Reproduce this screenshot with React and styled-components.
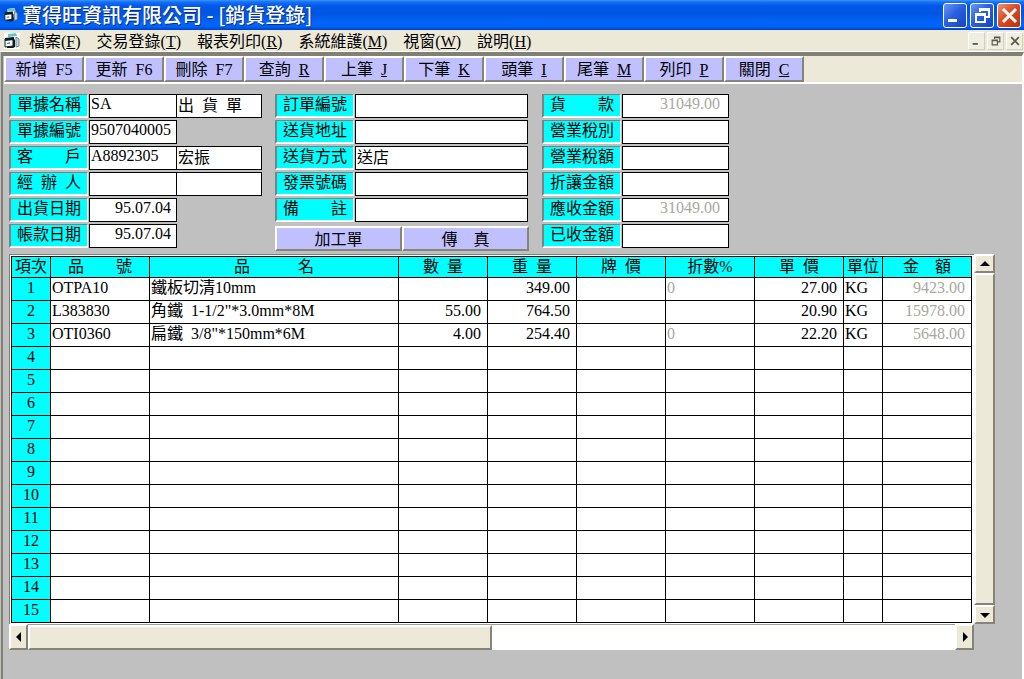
import React from "react";
import styled, { createGlobalStyle, css } from "styled-components";

const menus = [
  ["檔案", "F"],
  ["交易登錄", "T"],
  ["報表列印", "R"],
  ["系統維護", "M"],
  ["視窗", "W"],
  ["說明", "H"],
];

const tools = [
  { label: "新增", keyName: "F5" },
  { label: "更新", keyName: "F6" },
  { label: "刪除", keyName: "F7" },
  { label: "查詢", keyName: "R", mark: true },
  { label: "上筆", keyName: "J", mark: true },
  { label: "下筆", keyName: "K", mark: true },
  { label: "頭筆", keyName: "I", mark: true },
  { label: "尾筆", keyName: "M", mark: true },
  { label: "列印", keyName: "P", mark: true },
  { label: "關閉", keyName: "C", mark: true },
];

const slipFields = [
  { id: "kind", label: "單據名稱", value: "SA", extra: "出  貨  單" },
  { id: "number", label: "單據編號", value: "9507040005" },
  { id: "customer", label: "客　　戶", value: "A8892305", extra: "宏振" },
  { id: "handler", label: "經  辦  人", value: "", extra: "" },
  { id: "shipDate", label: "出貨日期", value: "95.07.04", right: true },
  { id: "billDate", label: "帳款日期", value: "95.07.04", right: true },
];

const orderFields = [
  { id: "order", label: "訂單編號", value: "" },
  { id: "address", label: "送貨地址", value: "" },
  { id: "delivery", label: "送貨方式", value: "送店" },
  { id: "invoice", label: "發票號碼", value: "" },
  { id: "note", label: "備　　註", value: "" },
];

const amountFields = [
  { id: "goods", label: "貨　　款", value: "31049.00" },
  { id: "taxType", label: "營業稅別", value: "" },
  { id: "tax", label: "營業稅額", value: "" },
  { id: "discount", label: "折讓金額", value: "" },
  { id: "due", label: "應收金額", value: "31049.00" },
  { id: "paid", label: "已收金額", value: "" },
];

const columns = [
  { key: "code", title: "品　　號", width: 99 },
  { key: "name", title: "品　　　名" },
  { key: "qty", title: "數  量", width: 89, right: true },
  { key: "weight", title: "重  量", width: 89, right: true },
  { key: "list", title: "牌  價", width: 89, right: true },
  { key: "rate", title: "折數%", width: 89, muted: true },
  { key: "price", title: "單  價", width: 89, right: true },
  { key: "unit", title: "單位", width: 39 },
  { key: "total", title: "金　額", width: 89, right: true, muted: true },
];

const items = [
  { code: "OTPA10", name: "鐵板切清10mm", weight: "349.00", rate: "0", price: "27.00", unit: "KG", total: "9423.00" },
  { code: "L383830", name: '角鐵  1-1/2"*3.0mm*8M', qty: "55.00", weight: "764.50", price: "20.90", unit: "KG", total: "15978.00" },
  { code: "OTI0360", name: '扁鐵  3/8"*150mm*6M', qty: "4.00", weight: "254.40", rate: "0", price: "22.20", unit: "KG", total: "5648.00" },
];

const rows = Array.from({ length: 15 }, (_, i) => items[i] || {});

function FormIcon({ size }) {
  return (
    <svg width={size} height={size} viewBox="0 0 16 16">
      <path d="M4 1l8-1 1 3v8l-9-1z" fill="#f4ffff" />
      <path d="M4 1l8-1 1 3-9 1z" fill="#64c8c8" />
      <path d="M12 4l3 2v7l-3 1z" fill="#c8d8d8" stroke="#788c90" />
      <path d="M1 6l8-1v8l-8 1z" fill="#fff" stroke="#101820" />
      <path d="M1 5l9-1v3L1 8z" fill="#101820" />
      <path d="M9 5l2 2v7l-2 1-6 0v-1l6-1z" fill="#101820" />
      <path d="M3 10l3-1v2H3z" fill="#3ca8a8" />
    </svg>
  );
}

function WindowGlyph({ name, size }) {
  const shapes = {
    min: <path d="M1 12h9v3H1z" fill="currentColor" />,
    restore: (
      <path
        d="M5 1h11v10h-4V9h2V4H7v1H5zM1 6h11v10H1zM3 9v5h7V9z"
        fill="currentColor"
        fillRule="evenodd"
      />
    ),
    close: <path d="M2 2l13 13M15 2L2 15" stroke="currentColor" strokeWidth="3" />,
  };
  return (
    <svg width={size} height={size} viewBox="0 0 17 17">
      {shapes[name]}
    </svg>
  );
}

function Arrow({ turn = 0 }) {
  return (
    <svg width="10" height="10" viewBox="0 0 10 10">
      <path d="M5 2l5 5H0z" fill="#000" transform={`rotate(${turn} 5 5)`} />
    </svg>
  );
}

function Field({ field, first, right, muted, pad }) {
  return (
    <FieldRow>
      <Label htmlFor={field.id}>{field.label}</Label>
      <Box
        id={field.id}
        defaultValue={field.value}
        $width={first}
        $right={right || field.right}
        $muted={muted}
        $pad={pad}
      />
      {field.extra !== undefined && (
        <ExtraBox aria-label={`${field.label} 名稱`} defaultValue={field.extra} $width={86} />
      )}
    </FieldRow>
  );
}

export default function App() {
  return (
    <Window>
      <GlobalStyle />
      <TitleBar>
        <FormIcon size={14} />
        <Title>寶得旺資訊有限公司 - [銷貨登錄]</Title>
        <TitleButton aria-label="最小化">
          <WindowGlyph name="min" size={17} />
        </TitleButton>
        <TitleButton aria-label="還原">
          <WindowGlyph name="restore" size={17} />
        </TitleButton>
        <TitleButton aria-label="關閉視窗" $close>
          <WindowGlyph name="close" size={17} />
        </TitleButton>
      </TitleBar>

      <MenuBar>
        <MenuIcon>
          <FormIcon size={16} />
        </MenuIcon>
        {menus.map(([label, letter]) => (
          <MenuButton key={letter}>
            {label}(<u>{letter}</u>)
          </MenuButton>
        ))}
        <ChildButtons>
          <ChildButton aria-label="最小化子視窗">
            <WindowGlyph name="min" size={10} />
          </ChildButton>
          <ChildButton aria-label="還原子視窗">
            <WindowGlyph name="restore" size={10} />
          </ChildButton>
          <ChildButton aria-label="關閉子視窗">
            <WindowGlyph name="close" size={10} />
          </ChildButton>
        </ChildButtons>
      </MenuBar>

      <Client>
        <ToolBar>
          {tools.map(({ label, keyName, mark }) => (
            <ToolButton key={label}>
              {label}
              {"  "}
              {mark ? <u>{keyName}</u> : keyName}
            </ToolButton>
          ))}
        </ToolBar>

        <Content>
          <Form>
            <Group>
              {slipFields.map((field) => (
                <Field key={field.id} field={field} first={88} pad={5} />
              ))}
            </Group>
            <Group>
              {orderFields.map((field) => (
                <Field key={field.id} field={field} first={173} pad={5} />
              ))}
              <Actions>
                <ActionButton>加工單</ActionButton>
                <ActionButton>傳　真</ActionButton>
              </Actions>
            </Group>
            <Group>
              {amountFields.map((field) => (
                <Field key={field.id} field={field} first={107} pad={8} right muted />
              ))}
            </Group>
          </Form>

          <GridArea>
            <TableFrame>
              <Table>
                <colgroup>
                  <Col $width={39} />
                  {columns.map((col) => (
                    <Col key={col.key} $width={col.width} />
                  ))}
                </colgroup>
                <thead>
                  <tr>
                    <HeadCell scope="col">項次</HeadCell>
                    {columns.map((col) => (
                      <HeadCell key={col.key} scope="col">
                        {col.title}
                      </HeadCell>
                    ))}
                  </tr>
                </thead>
                <tbody>
                  {rows.map((row, index) => (
                    <tr key={index}>
                      <IndexCell scope="row">{index + 1}</IndexCell>
                      {columns.map((col) => (
                        <Cell key={col.key} $right={col.right} $muted={col.muted}>
                          {row[col.key]}
                        </Cell>
                      ))}
                    </tr>
                  ))}
                </tbody>
              </Table>
            </TableFrame>
            <VerticalBar>
              <ScrollButton aria-label="向上捲動">
                <Arrow />
              </ScrollButton>
              <VerticalThumb />
              <ScrollButton aria-label="向下捲動">
                <Arrow turn={180} />
              </ScrollButton>
            </VerticalBar>
            <HorizontalBar>
              <ScrollButton aria-label="向左捲動">
                <Arrow turn={270} />
              </ScrollButton>
              <HorizontalTrack>
                <HorizontalThumb />
              </HorizontalTrack>
              <ScrollButton aria-label="向右捲動">
                <Arrow turn={90} />
              </ScrollButton>
            </HorizontalBar>
          </GridArea>
        </Content>
      </Client>
    </Window>
  );
}

const GlobalStyle = createGlobalStyle`
  * {
    box-sizing: border-box;
  }

  body {
    margin: 0;
    background: #c0c0c0;
  }

  body, button, input, table {
    font-family: "Liberation Serif", "Noto Sans CJK TC", serif;
    font-size: 16px;
    font-weight: 400;
    line-height: 20px;
    color: #000;
  }

  button {
    padding: 0;
    white-space: pre;
  }

  svg {
    display: block;
    flex: none;
  }
`;

const raised = css`
  border: 2px solid;
  border-color: #fff #848478 #848478 #fff;
`;

const Window = styled.div`
  display: flex;
  flex-direction: column;
  min-height: 100vh;
`;

const TitleBar = styled.header`
  display: flex;
  align-items: center;
  gap: 3px;
  height: 30px;
  padding: 0 3px 0 4px;
  background: linear-gradient(
    #3c96ff 0,
    #1670f4 2px,
    #0058e8 6px,
    #0056e4 14px,
    #0066fc 24px,
    #0060f4 27px,
    #0040c8 30px
  );
`;

const Title = styled.h1`
  flex: 1;
  margin: 0 0 0 1px;
  font-family: "Noto Sans CJK TC", sans-serif;
  font-size: 20px;
  font-weight: 500;
  line-height: 28px;
  color: #fff;
  text-shadow: 1px 1px #0a2c80;
  white-space: nowrap;
`;

const TitleButton = styled.button`
  display: flex;
  align-items: center;
  justify-content: center;
  width: 24px;
  height: 25px;
  border: 1px solid #fff;
  border-radius: 3px;
  color: #fff;
  background: ${(props) =>
    props.$close
      ? "linear-gradient(135deg, #ec9478, #dc4c20 45%, #b83008)"
      : "linear-gradient(135deg, #6c98f0, #2c60e0 45%, #1444c0)"};
`;

const MenuBar = styled.nav`
  display: flex;
  align-items: center;
  height: 22px;
  padding: 0 1px 0 4px;
  border-bottom: 1px solid #fff;
  background: #ece9d8;
`;

const MenuIcon = styled.span`
  margin-right: 1px;
  background: #fff;
`;

const MenuButton = styled.button`
  padding: 2px 8px 0;
  border: 0;
  background: none;
`;

const ChildButtons = styled.div`
  display: flex;
  gap: 2px;
  margin-left: auto;
`;

const ChildButton = styled.button`
  display: flex;
  align-items: center;
  justify-content: center;
  width: 17px;
  height: 18px;
  border: 1px solid;
  border-color: #fff #d4d0c0 #d4d0c0 #fff;
  color: #58584c;
  background: #f0eee0;
`;

const Client = styled.main`
  flex: 1;
  margin-left: 1px;
  padding-left: 1px;
  border: solid;
  border-width: 4px 2px 0;
  border-color: #808074 #fff #fff #808074;
  background: #c0c0c0;
`;

const ToolBar = styled.div`
  display: flex;
  height: 28px;
  border-bottom: 2px solid #fff;
  background: #ece9d8;
`;

const ToolButton = styled.button`
  ${raised}
  width: 80px;
  height: 26px;
  padding-top: 2px;
  background: #c0c0ff;
`;

const Content = styled.div`
  padding: 10px 27px 0 5px;
`;

const Form = styled.form`
  display: flex;
  gap: 13px;
`;

const Group = styled.div`
  display: flex;
  flex-direction: column;
  gap: 2px;
`;

const FieldRow = styled.div`
  display: flex;
  height: 24px;
`;

const Label = styled.label`
  width: 79px;
  margin-right: 1px;
  border: solid;
  border-width: 1px 1px 2px 2px;
  border-color: #808080 #fff #fff #808080;
  line-height: 20px;
  text-align: center;
  white-space: pre;
  background: #00ffff;
`;

const Box = styled.input`
  width: ${(props) => props.$width}px;
  height: 24px;
  padding: 0 ${(props) => props.$pad || 1}px 4px 1px;
  border: 1px solid #000;
  border-radius: 0;
  background: #fff;
  color: ${(props) => (props.$muted ? "#a8a8a0" : "#000")};
  text-align: ${(props) => (props.$right ? "right" : "left")};
`;

const ExtraBox = styled(Box)`
  margin-left: -1px;
`;

const Actions = styled.div`
  display: flex;
  width: 254px;
  margin-top: 2px;
`;

const ActionButton = styled.button`
  ${raised}
  flex: 1;
  height: 25px;
  padding-top: 2px;
  background: #c0c0ff;
`;

const GridArea = styled.section`
  display: grid;
  grid-template-columns: 1fr 21px;
  margin-top: 3px;
`;

const TableFrame = styled.div`
  padding: 1px 2px 1px 1px;
  border-top: 1px solid #808074;
  border-left: 1px solid #808074;
  background: #fff;
`;

const Table = styled.table`
  width: 100%;
  border-collapse: collapse;
  table-layout: fixed;
`;

const Col = styled.col`
  width: ${(props) => (props.$width ? `${props.$width}px` : "auto")};
`;

const cell = css`
  height: 23px;
  padding: 0 1px 2px;
  border: 1px solid #000;
  font-weight: 400;
  white-space: pre;
  overflow: hidden;
`;

const HeadCell = styled.th`
  ${cell}
  height: 21px;
  padding: 0;
  background: #00ffff;
`;

const IndexCell = styled.th`
  ${cell}
  background: #00ffff;
`;

const Cell = styled.td`
  ${cell}
  padding-right: ${(props) => (props.$right ? 6 : 1)}px;
  color: ${(props) => (props.$muted ? "#a8a8a0" : "#000")};
  text-align: ${(props) => (props.$right ? "right" : "left")};
`;

const VerticalBar = styled.div`
  display: flex;
  flex-direction: column;
`;

const ScrollButton = styled.button`
  ${raised}
  display: flex;
  align-items: center;
  justify-content: center;
  flex: none;
  min-width: 19px;
  min-height: 19px;
  background: #ece9d8;
`;

const VerticalThumb = styled.div`
  ${raised}
  flex: 1;
  background: #ece9d8;
`;

const HorizontalBar = styled.div`
  display: flex;
  height: 26px;
`;

const HorizontalTrack = styled.div`
  flex: 1;
  border-top: 1px solid #a0a094;
  background: #fff;
`;

const HorizontalThumb = styled.div`
  ${raised}
  width: 50%;
  height: 100%;
  background: #ece9d8;
`;
